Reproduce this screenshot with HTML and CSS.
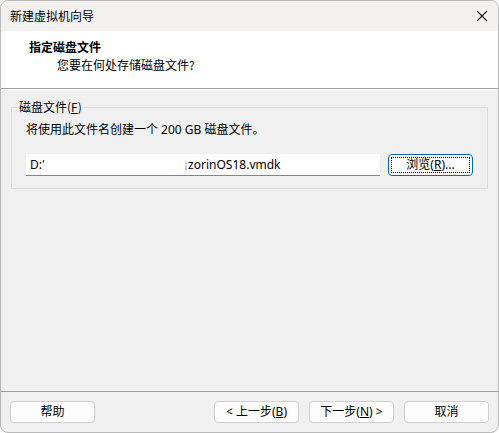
FILE: index.html
```html
<!DOCTYPE html>
<html lang="zh-CN">
<head>
<meta charset="utf-8">
<title>新建虚拟机向导</title>
<link rel="stylesheet" href="styles.css">
</head>
<body>
<div class="window">
  <div class="titlebar">
    <span class="title">新建虚拟机向导</span>
    <svg class="close" width="12" height="12" viewBox="0 0 12 12"><path d="M1 1L11 11M11 1L1 11" stroke="#1b1b1b" stroke-width="1.1" fill="none"/></svg>
  </div>
  <div class="header">
    <div class="h-title">指定磁盘文件</div>
    <div class="h-sub">您要在何处存储磁盘文件?</div>
  </div>
  <div class="content">
    <fieldset class="group">
      <legend>磁盘文件(<u>F</u>)</legend>
      <div class="desc">将使用此文件名创建一个 200 GB 磁盘文件。</div>
      <div class="row">
        <div class="input"><span>D:'</span><span class="gap"></span><span class="tick">¡</span><span>zorinOS18.vmdk</span></div>
        <div class="btn focus"><span class="dots">浏览(<u>R</u>)...</span></div>
      </div>
    </fieldset>
  </div>
  <div class="footer">
    <div class="btn">帮助</div>
    <div class="spacer"></div>
    <div class="btn">&lt; 上一步(<u>B</u>)</div>
    <div class="btn">下一步(<u>N</u>) &gt;</div>
    <div class="btn cancel">取消</div>
  </div>
</div>
</body>
</html>
```
FILE: styles.css
```css
* { box-sizing: border-box; }
html, body { margin: 0; padding: 0; background: #ffffff; }
body {
  font-family: "Noto Sans", "Noto Sans CJK SC", sans-serif;
  font-size: 12px;
  color: #000;
}
.window {
  width: 499px;
  height: 433px;
  border: 1px solid #b9b9b9;
  border-radius: 8px;
  overflow: hidden;
  background: #f0f0f0;
  display: flex;
  flex-direction: column;
}
.titlebar {
  height: 30px;
  background: #f3f0f0;
  display: flex;
  align-items: center;
  justify-content: space-between;
  padding: 0 9px 0 9px;
  flex: none;
}
.title { font-family: "Noto Sans CJK SC", sans-serif; font-size: 12px; line-height: 16px; }
.close { display: block; margin-right: 1px; }
.header {
  height: 58px;
  background: #ffffff;
  border-bottom: 1px solid #a0a0a0;
  padding: 7px 0 0 28px;
  flex: none;
  font-family: "Noto Sans CJK SC", sans-serif;
}
.h-title { font-weight: bold; line-height: 18px; }
.h-sub { padding-left: 28px; line-height: 18px; }
.content {
  flex: 1;
  padding: 9px 10px 0 10px;
  border-top: 1px solid #ffffff;
}
.group {
  margin: 0;
  border: 1px solid #dcdcdc;
  padding: 2px 14px 12px 14px;
  min-width: 0;
}
.group legend {
  padding: 0 2px;
  margin-left: -9px;
  font-family: "Noto Sans CJK SC", sans-serif;
  line-height: 16px;
}
.desc { line-height: 18px; margin-top: 4px; }
.row { display: flex; align-items: center; margin-top: 15px; }
.input {
  width: 354px;
  height: 22px;
  background: #fff;
  border-bottom: 1px solid #858585;
  padding-left: 4px;
  display: flex;
  align-items: center;
  white-space: pre;
  line-height: 16px;
}
.gap { display: inline-block; width: 140px; }
.tick { color: #777; font-size: 9px; margin-right: 1px; }
.btn {
  width: 85px;
  height: 22px;
  background: #fdfdfd;
  border: 1px solid #d0d0d0;
  border-radius: 4px;
  display: flex;
  align-items: center;
  justify-content: center;
  line-height: 16px;
  white-space: pre;
  flex: none;
}
.btn.focus {
  margin-left: 8px;
  border-color: #0067c0;
  padding: 2px;
  width: 85px;
}
.dots {
  flex: 1;
  align-self: stretch;
  border: 1px dotted #000;
  display: flex;
  align-items: center;
  justify-content: center;
}
.footer {
  height: 41px;
  flex: none;
  border-top: 1px solid #a0a0a0;
  display: flex;
  align-items: flex-start;
  padding: 9px 9px 0 9px;
  gap: 10px;
}
.footer .spacer { flex: 1; }
u { text-decoration-thickness: 1px; text-underline-offset: 1px; }
```
